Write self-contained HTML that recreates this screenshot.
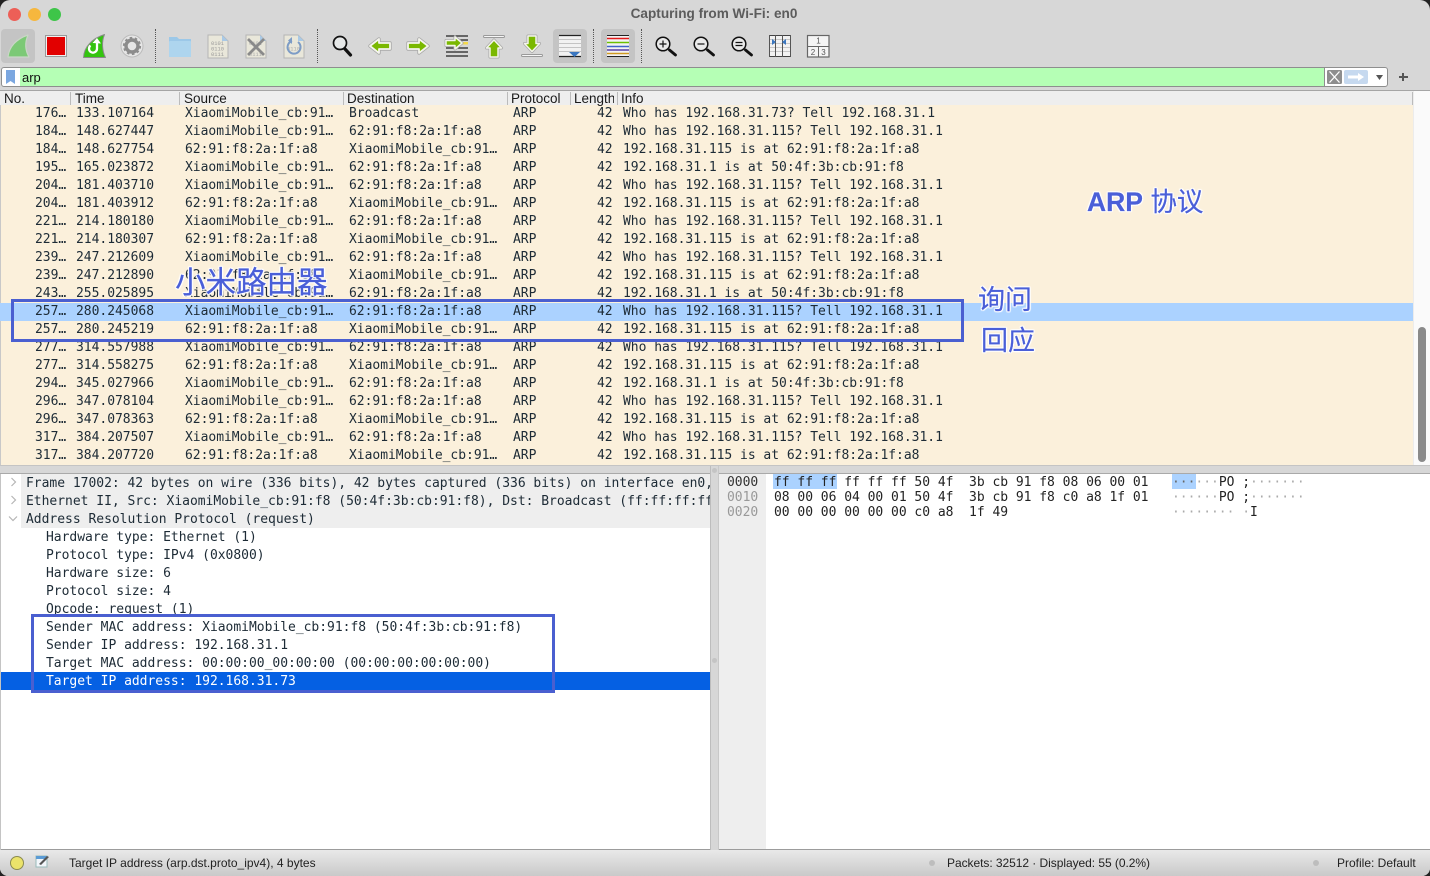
<!DOCTYPE html>
<html><head><meta charset="utf-8"><style>
*{box-sizing:border-box}
html,body{margin:0;padding:0;background:#222}
#w{position:relative;width:1430px;height:876px;overflow:hidden;background:#d7d7d7;border-radius:10px 10px 8px 8px;font-family:"Liberation Sans",sans-serif}
.abs,#w>div,#w>svg{position:absolute}
.tl{border-radius:50%;width:13px;height:13px;top:8px}
.ab{background:#c4c4c4;border-radius:4px;width:34px;height:34px;top:29px}
.sep{width:0;height:34px;top:29px;border-left:1px dotted #555}
.ico{top:30px;width:32px;height:32px}
.hd{top:92px;font-size:13.5px;color:#1a1a1a;line-height:14px}
.hs{top:92px;width:1px;height:13px;background:#bbb}
.r{position:absolute;left:0;width:1413px;height:18px;font:13px/18px "DejaVu Sans Mono",monospace;letter-spacing:-.025px;color:#1d2b36;white-space:pre}
.r span{position:absolute;top:0}
.n{left:35px}.t{left:76px}.s{left:185px}.d{left:349px}.p{left:513px}.l{left:597px}.i{left:623px}
.m{position:absolute;font:13px/18px "DejaVu Sans Mono",monospace;letter-spacing:-.02px;color:#1d2b36;white-space:pre}
.h{position:absolute;font:13px/15px "DejaVu Sans Mono",monospace;letter-spacing:-.025px;color:#222;white-space:pre}
.an{color:#4a5fd8;white-space:nowrap;font-family:"Liberation Sans","Noto Sans CJK SC",sans-serif;-webkit-text-stroke:.2px #4a5fd8;text-shadow:1px 0 1px #fff,-1px 0 1px #fff,0 1px 1px #fff,0 -1px 1px #fff,1px 1px 1px #fff,-1px -1px 1px #fff,1px -1px 1px #fff,-1px 1px 1px #fff}
.st{font-size:12px;color:#222;top:856px;line-height:14px;white-space:pre}
</style></head><body><div id="w">

<div class="tl" style="left:8px;background:#ed5f57"></div>
<div class="tl" style="left:28px;background:#f6b73e"></div>
<div class="tl" style="left:48px;background:#3ec549"></div>
<div style="left:-1px;width:1430px;top:6px;text-align:center;font-size:13.6px;font-weight:bold;color:#5c5c5c;line-height:15px">Capturing from Wi-Fi: en0</div>

<div class="ab" style="left:1px"></div>
<div class="ab" style="left:553px"></div>
<div class="ab" style="left:601px"></div>
<div class="sep" style="left:155px"></div>
<div class="sep" style="left:317px"></div>
<div class="sep" style="left:593px"></div>
<div class="sep" style="left:641px"></div>

<svg class="ico" style="left:2px" viewBox="0 0 32 32"><path d="M6 27C7 17 14 9 26 5c-3 7-3 15 1 22z" fill="#7cc976" stroke="#c9d6c6" stroke-width="1.200" stroke-linejoin="round"/></svg>
<svg class="ico" style="left:40px" viewBox="0 0 32 32"><rect x="5.500" y="5.500" width="21" height="21" fill="#f2eeee" stroke="#999"/><rect x="7" y="7" width="18" height="18" fill="#e20000"/></svg>
<svg class="ico" style="left:78px" viewBox="0 0 32 32"><path d="M5.500 27.500C6 17 14 8.500 26.500 4.500c-3 7-2.500 16 1 23z" fill="#33c40f" stroke="#8a8a8a" stroke-width="1" stroke-linejoin="round"/><path d="M19 12v6.500a4 4 0 1 1-6.500-3" fill="none" stroke="#fff" stroke-width="2.300"/><path d="M14.500 13l4.500-5 4 5.500z" fill="#fff"/></svg>
<svg class="ico" style="left:116px" viewBox="0 0 32 32"><circle cx="16" cy="16" r="11" fill="#e6e6e6" stroke="#bbb"/><circle cx="16" cy="16" r="6" fill="none" stroke="#8c8c8c" stroke-width="3.400"/><circle cx="16" cy="16" r="8.200" fill="none" stroke="#8c8c8c" stroke-width="1.800" stroke-dasharray="2.600 2.550"/></svg>

<svg class="ico" style="left:164px" viewBox="0 0 32 32"><path d="M5 7h8l2 2h12v17a1 1 0 0 1-1 1H6a1 1 0 0 1-1-1z" fill="#9cc8e8"/><rect x="5" y="11" width="22" height="16" rx="1" fill="#aed5ee"/></svg>
<svg class="ico" style="left:202px" viewBox="0 0 32 32"><path d="M6 5h14l6 6v17H6z" fill="#e9e7da" stroke="#b5b5b5"/><path d="M20 5v6h6z" fill="#a9c9e6"/><text x="9" y="15" font-size="5.400" fill="#999" font-family="Liberation Mono">0101</text><text x="9" y="20.500" font-size="5.400" fill="#999" font-family="Liberation Mono">0110</text><text x="9" y="26" font-size="5.400" fill="#999" font-family="Liberation Mono">0111</text></svg>
<svg class="ico" style="left:240px" viewBox="0 0 32 32"><path d="M6 5h14l6 6v17H6z" fill="#e9e7da" stroke="#b5b5b5"/><path d="M20 5v6h6z" fill="#a9c9e6"/><text x="9" y="15" font-size="5.400" fill="#aaa" font-family="Liberation Mono">0101</text><text x="9" y="26" font-size="5.400" fill="#aaa" font-family="Liberation Mono">0111</text><path d="M8 9l16 16M24 9L8 25" stroke="#8a8a8a" stroke-width="2.800"/></svg>
<svg class="ico" style="left:278px" viewBox="0 0 32 32"><path d="M6 5h14l6 6v17H6z" fill="#e9e7da" stroke="#b5b5b5"/><path d="M20 5v6h6z" fill="#a9c9e6"/><text x="9" y="20.500" font-size="5.400" fill="#aaa" font-family="Liberation Mono">0110</text><path d="M20 12a6.500 6.500 0 1 1-6 -1" fill="none" stroke="#7d9cc6" stroke-width="2"/><path d="M14 7v7l-4-3.500z" fill="#7d9cc6"/></svg>

<svg class="ico" style="left:326px" viewBox="0 0 32 32"><circle cx="14" cy="13" r="6.500" fill="#e6e8e8" stroke="#111" stroke-width="1.700"/><path d="M19 19l5.500 6" stroke="#111" stroke-width="3.200" stroke-linecap="round"/></svg>
<svg class="ico" style="left:364px" viewBox="0 0 32 32"><g stroke-linejoin="round"><path d="M6 16l9-7v4h11v6H15v4z" fill="none" stroke="#a8a8a8" stroke-width="3.400"/><path d="M6 16l9-7v4h11v6H15v4z" fill="#7ab800" stroke="#f4f4ec" stroke-width="1.800"/></g></svg>
<svg class="ico" style="left:402px" viewBox="0 0 32 32"><g stroke-linejoin="round"><path d="M26 16l-9-7v4H6v6h11v4z" fill="none" stroke="#a8a8a8" stroke-width="3.400"/><path d="M26 16l-9-7v4H6v6h11v4z" fill="#7ab800" stroke="#f4f4ec" stroke-width="1.800"/></g></svg>
<svg class="ico" style="left:440px" viewBox="0 0 32 32"><path d="M6 6h22M6 10h22M6 18h22M6 22h22M6 26h22" stroke="#222" stroke-width="1.300"/><path d="M22 12h6v2.500h-6z" fill="#f5d94a"/><g stroke-linejoin="round"><path d="M22 13l-7-6v3.500H6v5h9V19z" fill="none" stroke="#a8a8a8" stroke-width="3"/><path d="M22 13l-7-6v3.500H6v5h9V19z" fill="#7ab800" stroke="#f4f4ec" stroke-width="1.500"/></g></svg>
<svg class="ico" style="left:478px" viewBox="0 0 32 32"><rect x="5.500" y="5.500" width="21" height="2" rx="1" fill="#f6f6f6" stroke="#9a9a9a"/><g stroke-linejoin="round"><path d="M16 10l7.500 8H20v9h-8v-9H8.500z" fill="none" stroke="#a8a8a8" stroke-width="3"/><path d="M16 10l7.500 8H20v9h-8v-9H8.500z" fill="#7ab800" stroke="#f4f4ec" stroke-width="1.500"/></g></svg>
<svg class="ico" style="left:516px" viewBox="0 0 32 32"><rect x="5.500" y="24.500" width="21" height="2" rx="1" fill="#f6f6f6" stroke="#9a9a9a"/><g stroke-linejoin="round"><path d="M16 21.500l7.500-8H20V6h-8v7.500H8.500z" fill="none" stroke="#a8a8a8" stroke-width="3"/><path d="M16 21.500l7.500-8H20V6h-8v7.500H8.500z" fill="#7ab800" stroke="#f4f4ec" stroke-width="1.500"/></g></svg>
<svg class="ico" style="left:554px" viewBox="0 0 32 32"><rect x="5" y="5" width="22" height="22" fill="#f2f2f2"/><path d="M5 5.500h22M5 26.500h22" stroke="#222" stroke-width="1.300"/><path d="M5 9.500h22M5 13.500h22M5 17.500h22M5 21.500h22" stroke="#c4c4c4"/><path d="M15 22h11l-5.500 5z" fill="#3b77c0"/></svg>
<svg class="ico" style="left:602px" viewBox="0 0 32 32"><rect x="5" y="5" width="22" height="22" fill="#f3f3f3"/><path d="M5 5.500h22M5 26.500h22" stroke="#222" stroke-width="1"/><path d="M5 8.500h22" stroke="#e21b1b" stroke-width="1.500"/><path d="M5 12.500h22" stroke="#6bc000" stroke-width="1.500"/><path d="M5 16.500h22" stroke="#3f64c8" stroke-width="1.500"/><path d="M5 20h22" stroke="#5a3fa8" stroke-width="1.500"/><path d="M5 23.500h22" stroke="#cf9a20" stroke-width="1.500"/></svg>
<svg class="ico" style="left:650px" viewBox="0 0 32 32"><circle cx="13" cy="14" r="6.800" fill="#e9e9e9" stroke="#111" stroke-width="1.500"/><path d="M19.500 20l6 5" stroke="#111" stroke-width="2.800" stroke-linecap="round"/><path d="M9.500 14h7M13 10.500v7" stroke="#111" stroke-width="1.200"/></svg>
<svg class="ico" style="left:688px" viewBox="0 0 32 32"><circle cx="13" cy="14" r="6.800" fill="#e9e9e9" stroke="#111" stroke-width="1.500"/><path d="M19.500 20l6 5" stroke="#111" stroke-width="2.800" stroke-linecap="round"/><path d="M9.500 14h7" stroke="#111" stroke-width="1.200"/></svg>
<svg class="ico" style="left:726px" viewBox="0 0 32 32"><circle cx="13" cy="14" r="6.800" fill="#e9e9e9" stroke="#111" stroke-width="1.500"/><path d="M19.500 20l6 5" stroke="#111" stroke-width="2.800" stroke-linecap="round"/><path d="M9.500 12.500h7M9.500 15.500h7" stroke="#111" stroke-width="1.200"/></svg>
<svg class="ico" style="left:764px" viewBox="0 0 32 32"><rect x="5" y="5" width="22" height="22" fill="#f2f2f2"/><path d="M5 5.500h22M5 26.500h22" stroke="#444"/><path d="M5 9.500h22M5 13.500h22M5 17.500h22M5 21.500h22" stroke="#c8c8c8"/><path d="M5.500 5v22M11.500 5v22M18.500 5v22M26.500 5v22" stroke="#555"/><path d="M8 9l4 3-4 3zM22 9l-4 3 4 3z" fill="#3b77c0"/></svg>
<svg class="ico" style="left:802px" viewBox="0 0 32 32"><rect x="5.500" y="5.500" width="21.500" height="21.500" fill="#f4f4f4" stroke="#666" stroke-width="1.200"/><path d="M5 16.500h22M16.500 16.500V27" stroke="#666"/><text x="16.500" y="13.500" font-size="8" text-anchor="middle" fill="#555" font-family="Liberation Sans">1</text><text x="11" y="25" font-size="8" text-anchor="middle" fill="#555" font-family="Liberation Sans">2</text><text x="21.500" y="25" font-size="8" text-anchor="middle" fill="#555" font-family="Liberation Sans">3</text></svg>

<!-- filter -->
<div style="left:1px;top:67px;width:1387px;height:20px;background:#fff;border:1px solid #8e8e8e;border-radius:3px"></div>
<div style="left:20px;top:68px;width:1305px;height:18px;background:#b5ffb5;border-right:1px solid #8e8e8e"></div>
<svg style="left:5px;top:69px" width="11" height="16" viewBox="0 0 11 16"><path d="M1 1h9v14l-4.500-3L1 15z" fill="#7ba7e0"/></svg>
<div style="left:22px;top:70px;font-size:13px;line-height:16px;color:#111">arp</div>
<svg style="left:1327px;top:70px" width="15" height="14" viewBox="0 0 15 14"><rect width="15" height="14" rx="1.500" fill="#8e8e8e"/><path d="M2.500 1.500l10 11M12.500 1.500l-10 11" stroke="#fff" stroke-width="1.300"/></svg>
<svg style="left:1344px;top:70px" width="24" height="14" viewBox="0 0 24 14"><rect width="24" height="14" rx="2" fill="#c6d9ef"/><path d="M4 5.500h10V3l6 4-6 4V8.500H4z" fill="#fff"/></svg>
<svg style="left:1375px;top:75px" width="9" height="5" viewBox="0 0 9 5"><path d="M1 0h7L4.500 5z" fill="#555"/></svg>
<div style="left:1399px;top:76px;width:9px;height:2px;background:#555"></div>
<div style="left:1402px;top:73px;width:2px;height:8px;background:#555"></div>

<!-- packet list -->
<div style="left:0;top:90px;width:1430px;height:1px;background:#a5a5a5"></div>
<div style="left:0;top:91px;width:1430px;height:375px;background:#fbf0db;overflow:hidden">
<div style="position:absolute;left:1413px;top:0;width:17px;height:375px;background:#fafafa;border-left:1px solid #ececec"></div>
</div>
<div style="left:0;top:91px;width:1px;height:375px;background:#c8c8c8"></div>
<div style="left:0;top:91px;width:1413px;height:375px;overflow:hidden">
<div style="position:absolute;left:0;top:212px;width:1413px;height:18px;background:#abd2ff"></div>
<div style="position:absolute;left:0;top:14px;width:1413px;height:361px">
<div class="r" style="top:0"><span class="n">176…</span><span class="t">133.107164</span><span class="s">XiaomiMobile_cb:91…</span><span class="d">Broadcast</span><span class="p">ARP</span><span class="l">42</span><span class="i">Who has 192.168.31.73? Tell 192.168.31.1</span></div>
<div class="r" style="top:18px"><span class="n">184…</span><span class="t">148.627447</span><span class="s">XiaomiMobile_cb:91…</span><span class="d">62:91:f8:2a:1f:a8</span><span class="p">ARP</span><span class="l">42</span><span class="i">Who has 192.168.31.115? Tell 192.168.31.1</span></div>
<div class="r" style="top:36px"><span class="n">184…</span><span class="t">148.627754</span><span class="s">62:91:f8:2a:1f:a8</span><span class="d">XiaomiMobile_cb:91…</span><span class="p">ARP</span><span class="l">42</span><span class="i">192.168.31.115 is at 62:91:f8:2a:1f:a8</span></div>
<div class="r" style="top:54px"><span class="n">195…</span><span class="t">165.023872</span><span class="s">XiaomiMobile_cb:91…</span><span class="d">62:91:f8:2a:1f:a8</span><span class="p">ARP</span><span class="l">42</span><span class="i">192.168.31.1 is at 50:4f:3b:cb:91:f8</span></div>
<div class="r" style="top:72px"><span class="n">204…</span><span class="t">181.403710</span><span class="s">XiaomiMobile_cb:91…</span><span class="d">62:91:f8:2a:1f:a8</span><span class="p">ARP</span><span class="l">42</span><span class="i">Who has 192.168.31.115? Tell 192.168.31.1</span></div>
<div class="r" style="top:90px"><span class="n">204…</span><span class="t">181.403912</span><span class="s">62:91:f8:2a:1f:a8</span><span class="d">XiaomiMobile_cb:91…</span><span class="p">ARP</span><span class="l">42</span><span class="i">192.168.31.115 is at 62:91:f8:2a:1f:a8</span></div>
<div class="r" style="top:108px"><span class="n">221…</span><span class="t">214.180180</span><span class="s">XiaomiMobile_cb:91…</span><span class="d">62:91:f8:2a:1f:a8</span><span class="p">ARP</span><span class="l">42</span><span class="i">Who has 192.168.31.115? Tell 192.168.31.1</span></div>
<div class="r" style="top:126px"><span class="n">221…</span><span class="t">214.180307</span><span class="s">62:91:f8:2a:1f:a8</span><span class="d">XiaomiMobile_cb:91…</span><span class="p">ARP</span><span class="l">42</span><span class="i">192.168.31.115 is at 62:91:f8:2a:1f:a8</span></div>
<div class="r" style="top:144px"><span class="n">239…</span><span class="t">247.212609</span><span class="s">XiaomiMobile_cb:91…</span><span class="d">62:91:f8:2a:1f:a8</span><span class="p">ARP</span><span class="l">42</span><span class="i">Who has 192.168.31.115? Tell 192.168.31.1</span></div>
<div class="r" style="top:162px"><span class="n">239…</span><span class="t">247.212890</span><span class="s">62:91:f8:2a:1f:a8</span><span class="d">XiaomiMobile_cb:91…</span><span class="p">ARP</span><span class="l">42</span><span class="i">192.168.31.115 is at 62:91:f8:2a:1f:a8</span></div>
<div class="r" style="top:180px"><span class="n">243…</span><span class="t">255.025895</span><span class="s">XiaomiMobile_cb:91…</span><span class="d">62:91:f8:2a:1f:a8</span><span class="p">ARP</span><span class="l">42</span><span class="i">192.168.31.1 is at 50:4f:3b:cb:91:f8</span></div>
<div class="r" style="top:198px"><span class="n">257…</span><span class="t">280.245068</span><span class="s">XiaomiMobile_cb:91…</span><span class="d">62:91:f8:2a:1f:a8</span><span class="p">ARP</span><span class="l">42</span><span class="i">Who has 192.168.31.115? Tell 192.168.31.1</span></div>
<div class="r" style="top:216px"><span class="n">257…</span><span class="t">280.245219</span><span class="s">62:91:f8:2a:1f:a8</span><span class="d">XiaomiMobile_cb:91…</span><span class="p">ARP</span><span class="l">42</span><span class="i">192.168.31.115 is at 62:91:f8:2a:1f:a8</span></div>
<div class="r" style="top:234px"><span class="n">277…</span><span class="t">314.557988</span><span class="s">XiaomiMobile_cb:91…</span><span class="d">62:91:f8:2a:1f:a8</span><span class="p">ARP</span><span class="l">42</span><span class="i">Who has 192.168.31.115? Tell 192.168.31.1</span></div>
<div class="r" style="top:252px"><span class="n">277…</span><span class="t">314.558275</span><span class="s">62:91:f8:2a:1f:a8</span><span class="d">XiaomiMobile_cb:91…</span><span class="p">ARP</span><span class="l">42</span><span class="i">192.168.31.115 is at 62:91:f8:2a:1f:a8</span></div>
<div class="r" style="top:270px"><span class="n">294…</span><span class="t">345.027966</span><span class="s">XiaomiMobile_cb:91…</span><span class="d">62:91:f8:2a:1f:a8</span><span class="p">ARP</span><span class="l">42</span><span class="i">192.168.31.1 is at 50:4f:3b:cb:91:f8</span></div>
<div class="r" style="top:288px"><span class="n">296…</span><span class="t">347.078104</span><span class="s">XiaomiMobile_cb:91…</span><span class="d">62:91:f8:2a:1f:a8</span><span class="p">ARP</span><span class="l">42</span><span class="i">Who has 192.168.31.115? Tell 192.168.31.1</span></div>
<div class="r" style="top:306px"><span class="n">296…</span><span class="t">347.078363</span><span class="s">62:91:f8:2a:1f:a8</span><span class="d">XiaomiMobile_cb:91…</span><span class="p">ARP</span><span class="l">42</span><span class="i">192.168.31.115 is at 62:91:f8:2a:1f:a8</span></div>
<div class="r" style="top:324px"><span class="n">317…</span><span class="t">384.207507</span><span class="s">XiaomiMobile_cb:91…</span><span class="d">62:91:f8:2a:1f:a8</span><span class="p">ARP</span><span class="l">42</span><span class="i">Who has 192.168.31.115? Tell 192.168.31.1</span></div>
<div class="r" style="top:342px"><span class="n">317…</span><span class="t">384.207720</span><span class="s">62:91:f8:2a:1f:a8</span><span class="d">XiaomiMobile_cb:91…</span><span class="p">ARP</span><span class="l">42</span><span class="i">192.168.31.115 is at 62:91:f8:2a:1f:a8</span></div>
</div>
</div>
<!-- header -->
<div style="left:0;top:91px;width:1413px;height:14px;background:#eeeeee"></div>
<div class="hs" style="left:70px"></div><div class="hs" style="left:179px"></div><div class="hs" style="left:343px"></div><div class="hs" style="left:507px"></div><div class="hs" style="left:570px"></div><div class="hs" style="left:617px"></div><div class="hs" style="left:1412px"></div>
<div class="hd" style="left:4px">No.</div><div class="hd" style="left:75px">Time</div><div class="hd" style="left:184px">Source</div><div class="hd" style="left:347px">Destination</div><div class="hd" style="left:511px">Protocol</div>
<div class="hd" style="left:574px;width:40px;overflow:hidden;white-space:nowrap">Length</div><div class="hd" style="left:621px">Info</div>
<div style="left:1418px;top:327px;width:8px;height:135px;background:#8a8a8a;border-radius:4px"></div>

<!-- lower panes -->
<div style="left:0;top:465px;width:1430px;height:1px;background:#c4c4c4"></div>
<div style="left:0;top:473px;width:1430px;height:377px;background:#fff;border-top:1px solid #a9a9a9;border-bottom:1px solid #9c9c9c"></div>
<div style="left:0;top:474px;width:1px;height:376px;background:#c4c4c4"></div>
<div style="left:21px;top:474px;width:689px;height:54px;background:#eeeeee"></div>
<div style="left:710px;top:466px;width:9px;height:384px;background:#d7d7d7;border-left:1px solid #bdbdbd;border-right:1px solid #c8c8c8"></div>
<div style="left:712px;top:468px;width:5px;height:5px;background:#c4c4c4;border-radius:50%"></div>
<div style="left:712px;top:658px;width:5px;height:5px;background:#c4c4c4;border-radius:50%"></div>
<div style="left:719px;top:474px;width:47px;height:375px;background:#eeeeee"></div>
<div style="left:1px;top:672px;width:709px;height:18px;background:#0560e3"></div>

<svg style="left:9px;top:477px" width="9" height="10" viewBox="0 0 9 10"><path d="M2.500 1l4 4-4 4" fill="none" stroke="#b5b5b5" stroke-width="1.200"/></svg>
<svg style="left:9px;top:495px" width="9" height="10" viewBox="0 0 9 10"><path d="M2.500 1l4 4-4 4" fill="none" stroke="#b5b5b5" stroke-width="1.200"/></svg>
<svg style="left:8px;top:514px" width="10" height="9" viewBox="0 0 10 9"><path d="M1 2.500l4 4 4-4" fill="none" stroke="#b5b5b5" stroke-width="1.200"/></svg>

<div style="left:1px;top:475px;width:709px;height:375px;overflow:hidden">
<div class="m" style="left:25px;top:0">Frame 17002: 42 bytes on wire (336 bits), 42 bytes captured (336 bits) on interface en0,</div>
<div class="m" style="left:25px;top:18px">Ethernet II, Src: XiaomiMobile_cb:91:f8 (50:4f:3b:cb:91:f8), Dst: Broadcast (ff:ff:ff:ff:ff:ff)</div>
<div class="m" style="left:25px;top:36px">Address Resolution Protocol (request)</div>
<div class="m" style="left:45px;top:54px">Hardware type: Ethernet (1)</div>
<div class="m" style="left:45px;top:72px">Protocol type: IPv4 (0x0800)</div>
<div class="m" style="left:45px;top:90px">Hardware size: 6</div>
<div class="m" style="left:45px;top:108px">Protocol size: 4</div>
<div class="m" style="left:45px;top:126px">Opcode: request (1)</div>
<div class="m" style="left:45px;top:144px">Sender MAC address: XiaomiMobile_cb:91:f8 (50:4f:3b:cb:91:f8)</div>
<div class="m" style="left:45px;top:162px">Sender IP address: 192.168.31.1</div>
<div class="m" style="left:45px;top:180px">Target MAC address: 00:00:00_00:00:00 (00:00:00:00:00:00)</div>
<div class="m" style="left:45px;top:198px;color:#fff">Target IP address: 192.168.31.73</div>
</div>

<!-- hex -->
<div style="left:773px;top:474px;width:64px;height:15px;background:#abd2ff"></div>
<div style="left:1172px;top:474px;width:24px;height:15px;background:#abd2ff"></div>
<div class="h" style="left:727px;top:475px;color:#333">0000</div>
<div class="h" style="left:727px;top:490px;color:#999">0010</div>
<div class="h" style="left:727px;top:505px;color:#999">0020</div>
<div class="h" style="left:774px;top:475px">ff ff ff ff ff ff 50 4f  3b cb 91 f8 08 06 00 01</div>
<div class="h" style="left:774px;top:490px">08 00 06 04 00 01 50 4f  3b cb 91 f8 c0 a8 1f 01</div>
<div class="h" style="left:774px;top:505px">00 00 00 00 00 00 c0 a8  1f 49</div>
<div class="h" style="left:1172px;top:475px"><span style="color:#666">···</span><span style="color:#aaa">···</span>PO <span>;</span><span style="color:#aaa">·······</span></div>
<div class="h" style="left:1172px;top:490px"><span style="color:#aaa">······</span>PO <span>;</span><span style="color:#aaa">·······</span></div>
<div class="h" style="left:1172px;top:505px"><span style="color:#aaa">········ ·</span>I</div>

<!-- status -->
<div style="left:0;top:850px;width:1430px;height:26px;background:linear-gradient(#e9e9e9,#c9c9c9)"></div>
<div style="left:10px;top:856px;width:14px;height:14px;border-radius:50%;background:#ebe36b;border:1px solid #8a8a50"></div>
<svg style="left:35px;top:854px" width="15" height="14" viewBox="0 0 15 14"><rect x="1" y="2" width="11" height="11" fill="#f2f6fa" stroke="#9bb"/><path d="M1 2h11v3H1z" fill="#5b9bd5"/><path d="M4 10l8-8 2 1-8 8z" fill="#555"/></svg>
<div class="st" style="left:69px">Target IP address (arp.dst.proto_ipv4), 4 bytes</div>
<div style="left:929px;top:860px;width:6px;height:6px;border-radius:50%;background:#bdbdbd"></div>
<div class="st" style="left:947px;letter-spacing:-.05px">Packets: 32512 · Displayed: 55 (0.2%)</div>
<div style="left:1313px;top:860px;width:6px;height:6px;border-radius:50%;background:#bdbdbd"></div>
<div class="st" style="left:1337px">Profile: Default</div>

<!-- annotations -->
<div style="left:11px;top:299px;width:953px;height:43px;border:3px solid #4a5fd0"></div>
<div style="left:31px;top:614px;width:524px;height:79px;border:3px solid #4a5fd0"></div>
<div class="an" style="left:175px;top:263px;font-size:30.500px;line-height:40px">小米路由器</div>
<div class="an" style="left:1087px;top:184px;font-size:26.500px;line-height:37px"><b>ARP</b> 协议</div>
<div class="an" style="left:978px;top:282px;font-size:27px;line-height:37px">询问</div>
<div class="an" style="left:981px;top:323px;font-size:27px;line-height:37px">回应</div>
</div></body></html>
